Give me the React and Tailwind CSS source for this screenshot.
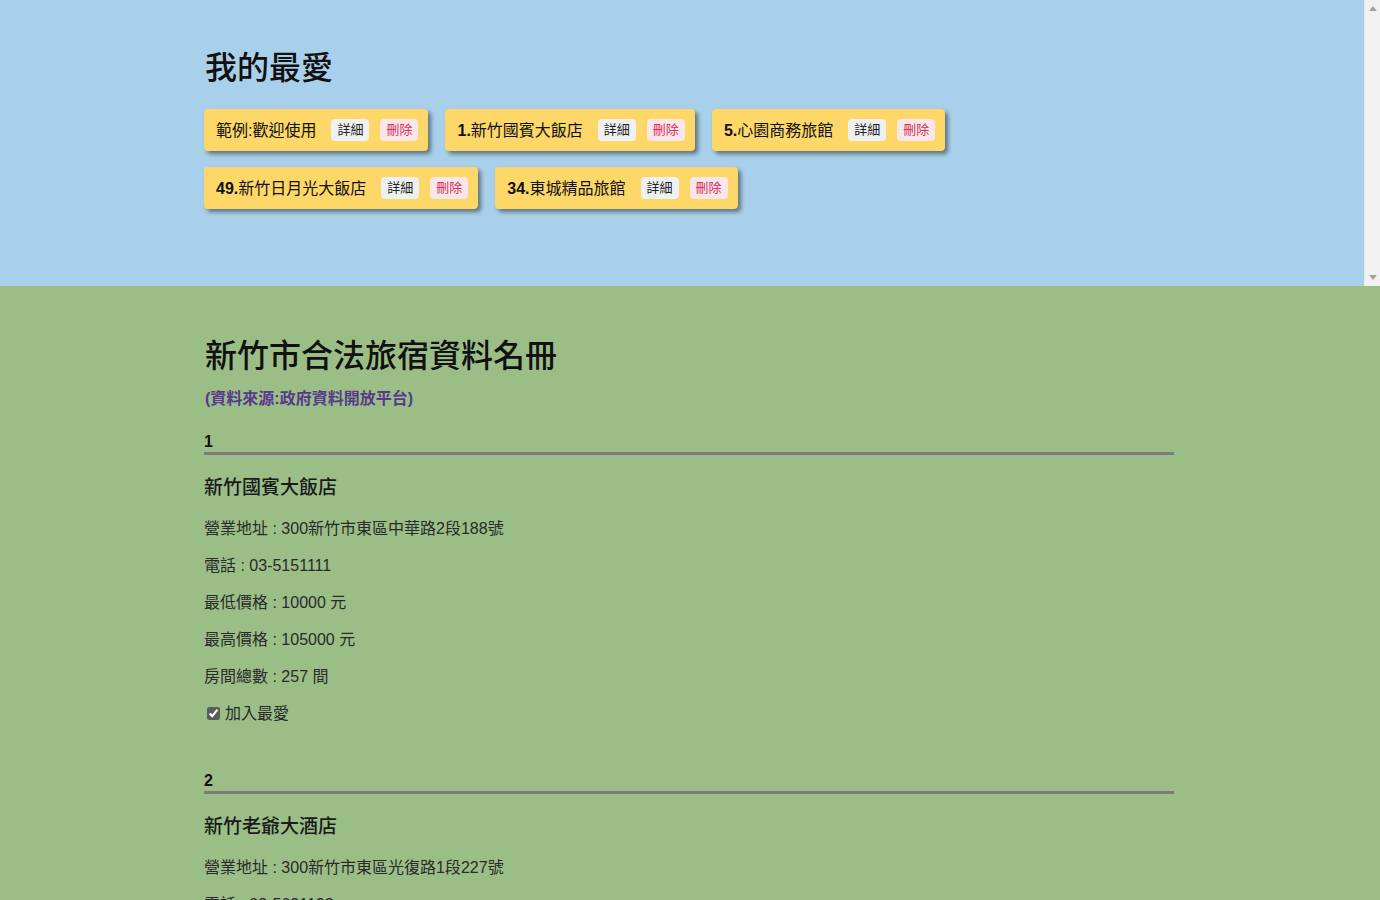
import React from 'react';

const favorites = [
    { num: '', name: '範例:歡迎使用' },
    { num: '1.', name: '新竹國賓大飯店' },
    { num: '5.', name: '心園商務旅館' },
    { num: '49.', name: '新竹日月光大飯店' },
    { num: '34.', name: '東城精品旅館' },
];

const hotels = [
    {
        id: 1,
        name: '新竹國賓大飯店',
        address: '300新竹市東區中華路2段188號',
        tel: '03-5151111',
        min: '10000',
        max: '105000',
        rooms: '257',
    },
    {
        id: 2,
        name: '新竹老爺大酒店',
        address: '300新竹市東區光復路1段227號',
        tel: '03-5631122',
        min: '6000',
        max: '60000',
        rooms: '208',
    },
];

function FavCard({ num, name }) {
    return (
        <div className="flex items-center h-[42px] pl-[12px] pr-[10px] bg-[#fdd868] rounded-[4px] shadow-[3px_3px_4px_rgba(0,0,0,0.45)]">
            <span className="text-[16px] leading-[21px] text-[#111]">
                {num && <b className="font-bold">{num}</b>}
                {name}
            </span>
            <button className="ml-[15px] h-[22px] px-[6px] rounded-[4px] bg-[#eff0f2] text-[13px] leading-[22px] text-[#222]">詳細</button>
            <button className="ml-[11px] h-[22px] px-[6px] rounded-[4px] bg-[#f7e6ea] text-[13px] leading-[22px] text-[#d8325a]">刪除</button>
        </div>
    );
}

function HotelItem({ hotel }) {
    return (
        <div className="mb-[46px]">
            <div className="text-[16px] leading-[21px] font-bold text-[#111]">{hotel.id}</div>
            <div className="h-[3px] bg-[#7b7b7b]"></div>
            <h3 className="mt-[21px] text-[19px] leading-[24px] font-medium text-[#1a1a1a]">{hotel.name}</h3>
            <div className="mt-[18px] flex flex-col gap-[16px] text-[16px] leading-[21px] text-[#2a2a2a]">
                <p>營業地址 : {hotel.address}</p>
                <p>電話 : {hotel.tel}</p>
                <p>最低價格 : {hotel.min} 元</p>
                <p>最高價格 : {hotel.max} 元</p>
                <p>房間總數 : {hotel.rooms} 間</p>
                <label className="flex items-center">
                    <input type="checkbox" defaultChecked className="ml-[3px] mr-[5px] w-[13px] h-[13px] accent-[#5c5c5c]" />
                    加入最愛
                </label>
            </div>
        </div>
    );
}

export default function App() {
    return (
        <div
            className="h-screen flex flex-col overflow-hidden"
            style={{ fontFamily: '"Liberation Sans", "Noto Sans CJK TC", sans-serif' }}
        >
            {/* Favorites */}
            <div className="relative h-[286px] shrink-0 bg-[#a8d0ea]">
                <div className="h-full overflow-y-auto">
                    <div className="w-[970px] ml-[204px] pt-[48px]">
                        <h1 className="text-[32px] leading-[40px] font-medium text-[#111] pl-[1px]">我的最愛</h1>
                        <div className="mt-[21px] flex flex-wrap gap-x-[17px] gap-y-[16px]">
                            {favorites.map((f, i) => (
                                <FavCard key={i} num={f.num} name={f.name} />
                            ))}
                        </div>
                    </div>
                </div>
                {/* scrollbar strip */}
                <div aria-hidden className="absolute top-0 right-0 w-[16px] h-full bg-[#f1f1f1] border-l border-[#e8e8e8] flex flex-col justify-between items-center py-[6px]">
                    <svg width="8" height="5" viewBox="0 0 8 5"><path d="M4 0L8 5H0Z" fill="#a3a3a3" /></svg>
                    <svg width="8" height="5" viewBox="0 0 8 5"><path d="M0 0H8L4 5Z" fill="#a3a3a3" /></svg>
                </div>
            </div>

            {/* Hotel list */}
            <div className="flex-1 bg-[#9bbe87] overflow-hidden">
                <div className="w-[970px] ml-[204px] pt-[50px]">
                    <h2 className="text-[32px] leading-[40px] font-medium text-[#111] pl-[1px]">新竹市合法旅宿資料名冊</h2>
                    <div className="mt-[12px] text-[16px] leading-[21px] font-bold text-[#553a8c] pl-[1px]">(資料來源:政府資料開放平台)</div>
                    <div className="mt-[22px]">
                        {hotels.map(h => (
                            <HotelItem key={h.id} hotel={h} />
                        ))}
                    </div>
                </div>
            </div>
        </div>
    );
}
